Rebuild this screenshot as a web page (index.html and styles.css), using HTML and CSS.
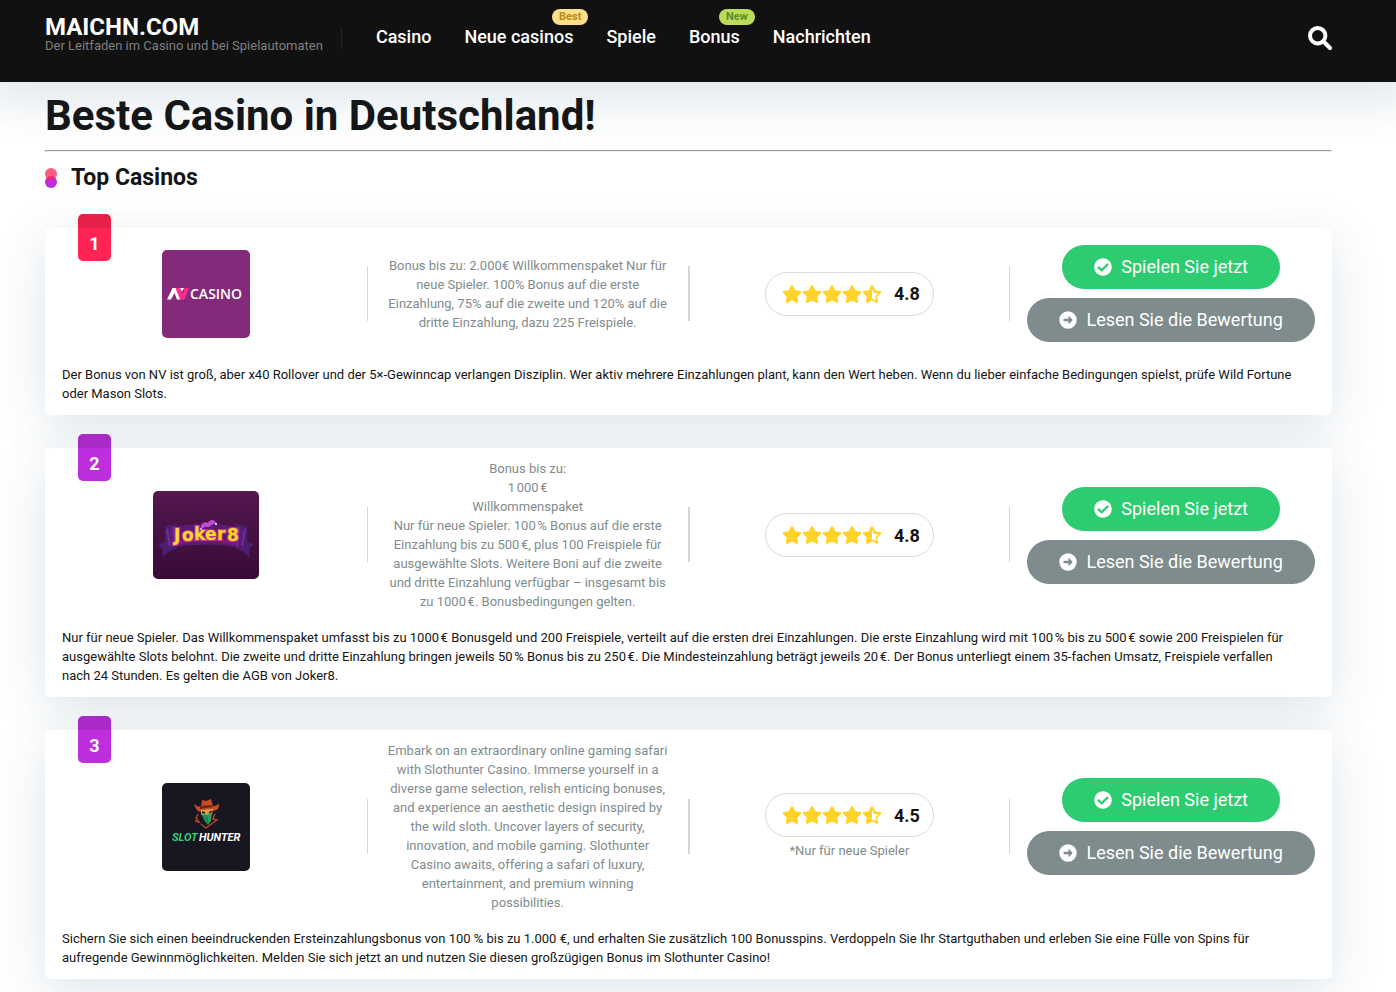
FILE: index.html
```html
<!DOCTYPE html>
<html lang="de">
  <head>
    <meta charset="UTF-8" />
    <meta name="viewport" content="width=device-width, initial-scale=1.0" />
    <title>Beste Casino in Deutschland!</title>
    <link rel="stylesheet" href="styles.css" />
  </head>
  <body>
    <!-- shared icons -->
    <svg class="sprite" aria-hidden="true">
      <symbol id="star" viewBox="0 0 576 512">
        <path d="M259.300 17.800L194 150.200 47.900 171.500c-26.200 3.800-36.700 36.100-17.700 54.600l105.700 103-25 145.500c-4.500 26.300 23.200 46 46.400 33.700L288 439.600l130.700 68.700c23.200 12.200 50.900-7.400 46.400-33.700l-25-145.500 105.700-103c19-18.500 8.500-50.800-17.700-54.600L382 150.200 316.700 17.800c-11.700-23.600-45.600-23.900-57.400 0z" />
      </symbol>
      <symbol id="star-half" viewBox="0 0 576 512">
        <path d="M528.500 171.500l-146.400-21.300-65.400-132.400C310.800 5.900 299.400 0 288 0s-22.800 5.900-28.700 17.800l-65.400 132.400-146.100 21.300c-26.200 3.800-36.700 36.100-17.700 54.600l105.700 103-25 145.500c-4.500 26.100 23 46 46.400 33.700l130.800-68.700 130.700 68.700c23.400 12.300 50.900-7.600 46.400-33.700l-25-145.500 105.700-103c19-18.500 8.500-50.800-17.700-54.600zM388.600 312.300l22.800 132.400-118.700-62.500L288 380V104l60.700 120 132.100 19.200z" />
      </symbol>
      <symbol id="check" viewBox="0 0 512 512">
        <path d="M504 256c0 137-111 248-248 248S8 393 8 256 119 8 256 8s248 111 248 248zM227.300 387.300l184-184c6.200-6.200 6.200-16.400 0-22.600l-22.600-22.600c-6.200-6.200-16.400-6.200-22.600 0L216 308.100l-70.100-70.100c-6.200-6.200-16.400-6.200-22.600 0l-22.600 22.600c-6.200 6.200-6.200 16.400 0 22.600l104 104c6.200 6.300 16.400 6.300 22.600.1z" />
      </symbol>
      <symbol id="arrow" viewBox="0 0 512 512">
        <path fill-rule="evenodd" d="M256 8a248 248 0 1 1 0 496a248 248 0 1 1 0-496zM140 222q-12 0-12 12v44q0 12 12 12h128v62c0 12 14 17 22 9l94-96q9-9 0-18l-94-96c-8-8-22-3-22 9v62z" />
      </symbol>
    </svg>

    <header class="header">
      <div class="logo">
        <a href="#" class="logo-name">MAICHN.COM</a>
        <span class="logo-desc">Der Leitfaden im Casino und bei Spielautomaten</span>
      </div>
      <nav class="menu">
        <a href="#">Casino</a>
        <a href="#">Neue casinos<span class="tag tag-best">Best</span></a>
        <a href="#">Spiele</a>
        <a href="#">Bonus<span class="tag tag-new">New</span></a>
        <a href="#">Nachrichten</a>
      </nav>
      <button class="search" aria-label="Suche">
        <svg viewBox="0 0 24 24" width="24" height="24">
          <circle cx="9.700" cy="9.700" r="7.700" fill="none" stroke="#fff" stroke-width="4" />
          <path d="M16 16l6 6" stroke="#fff" stroke-width="4" stroke-linecap="round" />
        </svg>
      </button>
    </header>

    <main class="main">
      <h1>Beste Casino in Deutschland!</h1>
      <hr />
      <h2>Top Casinos</h2>

      <article class="card">
        <div class="num num-first">1</div>
        <div class="row">
          <div class="col">
            <a href="#" class="brand" aria-label="NV Casino">
              <svg viewBox="0 0 88 88" width="88" height="88">
                <rect width="88" height="88" fill="#832b7a" />
                <path d="M5 49.500L10.500 38h4l4.500 11.500h-4L12.500 43 9 49.500z" fill="#fff" />
                <path d="M13.500 38h4.500l3 6 1.500-6h4.500l-4.500 11.500H18z" fill="#ff2a91" />
                <path d="M18 38h4l-2 3.500z" fill="#fff" />
                <text x="28" y="49" class="nv-text">CASINO</text>
              </svg>
            </a>
          </div>
          <div class="col bonus">
            <p>Bonus bis zu: 2.000€ Willkommenspaket Nur für neue Spieler. 100% Bonus auf die erste Einzahlung, 75% auf die zweite und 120% auf die dritte Einzahlung, dazu 225 Freispiele.</p>
          </div>
          <div class="col rating">
            <div class="stars">
              <svg><use href="#star" /></svg><svg><use href="#star" /></svg><svg><use href="#star" /></svg><svg><use href="#star" /></svg><svg><use href="#star-half" /></svg>
              <strong>4.8</strong>
            </div>
          </div>
          <div class="col buttons">
            <a href="#" class="btn btn-play"><svg><use href="#check" /></svg>Spielen Sie jetzt</a>
            <a href="#" class="btn btn-read"><svg><use href="#arrow" /></svg>Lesen Sie die Bewertung</a>
          </div>
        </div>
        <p class="desc">Der Bonus von NV ist groß, aber x40 Rollover und der 5×-Gewinncap verlangen Disziplin. Wer aktiv mehrere Einzahlungen plant, kann den Wert heben. Wenn du lieber einfache Bedingungen spielst, prüfe Wild Fortune oder Mason Slots.</p>
      </article>

      <article class="card">
        <div class="num">2</div>
        <div class="row">
          <div class="col">
            <a href="#" class="brand" aria-label="Joker8">
              <svg viewBox="0 0 106 88" width="106" height="88">
                <defs>
                  <linearGradient id="jbg" x1="0" y1="0" x2="0" y2="1">
                    <stop offset="0" stop-color="#54174f" />
                    <stop offset="1" stop-color="#380a35" />
                  </linearGradient>
                </defs>
                <rect width="106" height="88" fill="url(#jbg)" />
                <path d="M12 35l12-2v24q-9 3-15 10l1-9-5-5 7-2zM94 35l-12-2v24q9 3 15 10l-1-9 5-5-7-2z" fill="#49206f" />
                <path d="M17 37q36-9 72 0l3 20q-39-7-77 0z" fill="#5a1b73" />
                <path d="M14 38l3 17M20 36l2 19M92 38l-3 17M86 36l-2 19" stroke="#742a98" stroke-width="2" />
                <path d="M24 52q29-7 58 0" stroke="#861578" stroke-width="4" fill="none" />
                <g class="joker-text">
                  <text x="21" y="50">J</text>
                  <text x="29" y="50">o</text>
                  <text x="41" y="49">k</text>
                  <text x="52" y="49">e</text>
                  <text x="64" y="49">r</text>
                  <text x="74" y="50">8</text>
                </g>
                <path d="M48 38c-1-5 3-8 7-6 2-5 8-3 8 1-4-1-6 4-9 3-3-1-3 2-6 2z" fill="#c04bd5" />
                <circle cx="63" cy="33" r="1" fill="#fff" />
                <circle cx="48" cy="38" r="1" fill="#eac6f0" />
              </svg>
            </a>
          </div>
          <div class="col bonus">
            <p>Bonus bis zu:<br />1&#8239;000&#8239;€<br />Willkommenspaket<br />Nur für neue Spieler. 100&#8239;% Bonus auf die erste Einzahlung bis zu 500&#8239;€, plus 100 Freispiele für ausgewählte Slots. Weitere Boni auf die zweite und dritte Einzahlung verfügbar – insgesamt bis zu 1000&#8239;€. Bonusbedingungen gelten.</p>
          </div>
          <div class="col rating">
            <div class="stars">
              <svg><use href="#star" /></svg><svg><use href="#star" /></svg><svg><use href="#star" /></svg><svg><use href="#star" /></svg><svg><use href="#star-half" /></svg>
              <strong>4.8</strong>
            </div>
          </div>
          <div class="col buttons">
            <a href="#" class="btn btn-play"><svg><use href="#check" /></svg>Spielen Sie jetzt</a>
            <a href="#" class="btn btn-read"><svg><use href="#arrow" /></svg>Lesen Sie die Bewertung</a>
          </div>
        </div>
        <p class="desc">Nur für neue Spieler. Das Willkommenspaket umfasst bis zu 1000&#8239;€ Bonusgeld und 200 Freispiele, verteilt auf die ersten drei Einzahlungen. Die erste Einzahlung wird mit 100&#8239;% bis zu 500&#8239;€ sowie 200 Freispielen für ausgewählte Slots belohnt. Die zweite und dritte Einzahlung bringen jeweils 50&#8239;% Bonus bis zu 250&#8239;€. Die Mindesteinzahlung beträgt jeweils 20&#8239;€. Der Bonus unterliegt einem 35-fachen Umsatz, Freispiele verfallen nach 24 Stunden. Es gelten die AGB von Joker8.</p>
      </article>

      <article class="card">
        <div class="num">3</div>
        <div class="row">
          <div class="col">
            <a href="#" class="brand" aria-label="Slothunter">
              <svg viewBox="0 0 88 88" width="88" height="88">
                <rect width="88" height="88" fill="#171621" />
                <path d="M32 20q3 5 7 3l1-6 4 1 5-2 2 7q5 0 6-3 1 7-6 8l-13 1q-5-2-6-9z" fill="#c84a27" />
                <path d="M38 23l12-1 1 2-13 2z" fill="#642919" />
                <path d="M39 27l12-1-1 6-5 1-6-1z" fill="#e09b4c" />
                <path d="M40 29l3 1M47 30l3-2" stroke="#171621" stroke-width="1.500" />
                <path d="M39 30l6 2 5-3-1 9-3 4-4-5z" fill="#2d9b5c" />
                <path d="M44 32l2 8M41 33l2 4" stroke="#17683d" />
                <path d="M36 31l-2 4 3 4-4-1M53 31l-2 5 4 1-7 5-4 3-5-4" stroke="#b44426" stroke-width="1.500" fill="none" />
                <text x="10" y="58" class="slot-text" fill="#35d07f">SLOT</text>
                <text x="37" y="58" class="slot-text" fill="#fff">HUNTER</text>
              </svg>
            </a>
          </div>
          <div class="col bonus">
            <p>Embark on an extraordinary online gaming safari with Slothunter Casino. Immerse yourself in a diverse game selection, relish enticing bonuses, and experience an aesthetic design inspired by the wild sloth. Uncover layers of security, innovation, and mobile gaming. Slothunter Casino awaits, offering a safari of luxury, entertainment, and premium winning possibilities.</p>
          </div>
          <div class="col rating">
            <div class="stars">
              <svg><use href="#star" /></svg><svg><use href="#star" /></svg><svg><use href="#star" /></svg><svg><use href="#star" /></svg><svg><use href="#star-half" /></svg>
              <strong>4.5</strong>
            </div>
            <p class="note">*Nur für neue Spieler</p>
          </div>
          <div class="col buttons">
            <a href="#" class="btn btn-play"><svg><use href="#check" /></svg>Spielen Sie jetzt</a>
            <a href="#" class="btn btn-read"><svg><use href="#arrow" /></svg>Lesen Sie die Bewertung</a>
          </div>
        </div>
        <p class="desc">Sichern Sie sich einen beeindruckenden Ersteinzahlungsbonus von 100 % bis zu 1.000 €, und erhalten Sie zusätzlich 100 Bonusspins. Verdoppeln Sie Ihr Startguthaben und erleben Sie eine Fülle von Spins für aufregende Gewinnmöglichkeiten. Melden Sie sich jetzt an und nutzen Sie diesen großzügigen Bonus im Slothunter Casino!</p>
      </article>
    </main>
  </body>
</html>
```
FILE: styles.css
```css
* {
  box-sizing: border-box;
  margin: 0;
  padding: 0;
}
body {
  font-family: Roboto, "Liberation Sans", sans-serif;
  font-size: 13px;
  line-height: 19px;
  color: #151515;
  background-color: #fff;
  overflow-x: hidden;
}
a {
  color: inherit;
  text-decoration: none;
}
.sprite {
  display: none;
}

/* header */
.header {
  position: relative;
  display: flex;
  align-items: flex-start;
  height: 82px;
  padding: 0 64px 0 45px;
  background-color: #111;
  box-shadow: 0 5px 45px 15px rgba(28, 82, 122, 0.14);
}
.logo {
  position: relative;
  padding: 15px 19px 0 0;
}
.logo::after {
  content: "";
  position: absolute;
  right: 0;
  top: 27px;
  height: 22px;
  border-right: 1px solid #232323;
}
.logo-name {
  display: block;
  font-size: 24px;
  font-weight: 700;
  line-height: 24px;
  color: #fff;
}
.logo-desc {
  display: block;
  line-height: 14px;
  color: #7f7f7f;
}
.menu {
  display: flex;
  gap: 33px;
  padding: 25px 0 0 34px;
}
.menu a {
  position: relative;
  font-size: 18px;
  font-weight: 500;
  line-height: 24px;
  color: #fff;
}
.tag {
  position: absolute;
  top: -16px;
  right: -15px;
  padding: 0 7px;
  border-radius: 8px;
  font-size: 11px;
  font-weight: 700;
  line-height: 16px;
}
.tag-best {
  background-color: #ffe08a;
  color: #b58a1b;
}
.tag-new {
  background-color: #badc58;
  color: #5c8a2c;
}
.search {
  margin: 26px 0 0 auto;
  border: 0;
  background: none;
  cursor: pointer;
}
.search svg {
  display: block;
}

/* content */
.main {
  padding: 9px 64px 33px 45px;
}
h1 {
  font-size: 42px;
  line-height: 50px;
}
hr {
  margin-top: 9px;
}
h2 {
  position: relative;
  margin: 12px 0 36px;
  padding-left: 26px;
  font-size: 23px;
  line-height: 28px;
}
h2::before,
h2::after {
  content: "";
  position: absolute;
  left: 0;
  width: 12px;
  height: 12px;
  border-radius: 50%;
}
h2::before {
  top: 12px;
  background-color: #be2edd;
}
h2::after {
  top: 4px;
  background-color: rgba(255, 36, 83, 0.75);
}
.card {
  position: relative;
  margin-bottom: 33px;
  padding: 11px 0 12px;
  border-radius: 5px;
  background-color: #fff;
  box-shadow: 0 12px 50px rgba(28, 82, 122, 0.15);
}
.num {
  position: absolute;
  left: 33px;
  top: -14px;
  width: 33px;
  height: 47px;
  padding-top: 20px;
  border-radius: 5px;
  background: linear-gradient(rgba(0, 0, 0, 0.1) 14px, transparent 14px) #be2edd;
  color: #fff;
  font-size: 18px;
  font-weight: 700;
  text-align: center;
}
.num-first {
  background-color: #ff2453;
}
.row {
  display: grid;
  grid-template-columns: repeat(4, 1fr);
}
.col {
  position: relative;
  display: flex;
  flex-direction: column;
  align-items: center;
  justify-content: center;
  padding: 0 20px;
  text-align: center;
  color: #7f8c8d;
}
.bonus::before,
.rating::before {
  content: "";
  position: absolute;
  left: 0;
  right: 0;
  top: 50%;
  height: 55px;
  margin-top: -28px;
  border: solid #d5d6dd;
  border-width: 0 1px;
  pointer-events: none;
}
.brand svg {
  display: block;
  border-radius: 5px;
}
.nv-text {
  font-family: "Open Sans", sans-serif;
  font-size: 14px;
  font-weight: 600;
  fill: #fff;
}
.joker-text {
  font-family: "DejaVu Sans", sans-serif;
  font-size: 17px;
  font-weight: 700;
  fill: #ffd91f;
  stroke: #c0389a;
  stroke-width: 2px;
  paint-order: stroke;
}
.slot-text {
  font-size: 11px;
  font-weight: 700;
  font-style: italic;
}
.stars {
  display: flex;
  align-items: center;
  height: 44px;
  padding: 0 13px 0 16px;
  border: 1px solid #d9dadd;
  border-radius: 22px;
}
.stars svg {
  width: 20px;
  height: 18px;
  fill: #ffd32a;
}
.stars strong {
  margin-left: 12px;
  font-size: 18px;
  color: #151515;
}
.note {
  margin-top: 4px;
}
.buttons {
  gap: 9px;
  padding: 6px 0;
}
.btn {
  display: flex;
  align-items: center;
  gap: 9px;
  height: 44px;
  padding: 0 32px;
  border-radius: 22px;
  font-size: 18px;
  line-height: 20px;
  white-space: nowrap;
  color: #fff;
}
.btn svg {
  width: 18px;
  height: 18px;
  fill: #fff;
}
.btn-play {
  background-color: #2ecc71;
}
.btn-read {
  background-color: #7f8c8d;
}
.desc {
  padding: 17px 32px 0 17px;
}
```
